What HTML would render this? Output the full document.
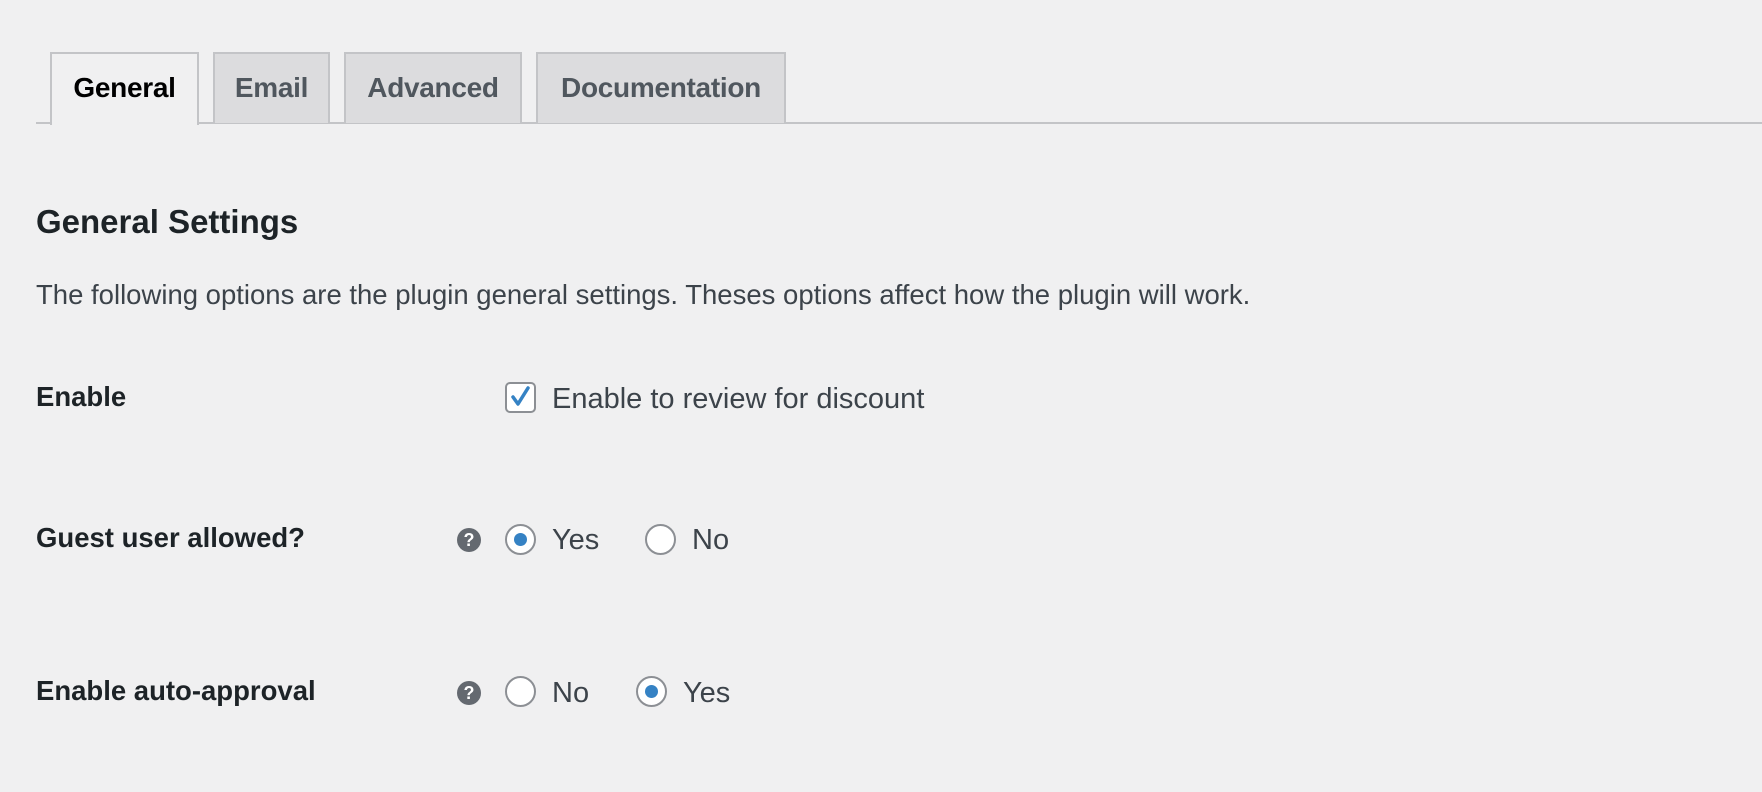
<!DOCTYPE html>
<html><head><meta charset="utf-8"><style>
*{box-sizing:border-box;margin:0;padding:0}
body{width:1762px;height:792px;background:#f0f0f1;font-family:"Liberation Sans",sans-serif;position:relative;overflow:hidden;color:#1d2327}
.line{position:absolute;left:36px;right:0;top:122px;height:2px;background:#c3c4c7}
.tab{position:absolute;top:52px;height:71px;border:2px solid #c3c4c7;border-bottom:none;background:#dcdcde;color:#50575e;font-weight:bold;font-size:28px;line-height:68px;text-align:center;letter-spacing:-0.3px}
.tab.act{background:#f0f0f1;color:#000;height:73px;z-index:2}
.abs{position:absolute;white-space:nowrap}
h2{position:absolute;left:36px;top:203px;font-size:33px;font-weight:bold;color:#1d2327}
.desc{left:36px;top:279px;font-size:27.5px;color:#3c434a}
.lbl{left:36px;font-size:27.5px;font-weight:bold;color:#1d2327}
.opt{font-size:29px;color:#3c434a}
.radio{position:absolute;width:31px;height:31px;border:2px solid #8c8f94;border-radius:50%;background:#fff}
.radio.on::after{content:"";position:absolute;left:7px;top:7px;width:13px;height:13px;border-radius:50%;background:#3582c4}
.help{position:absolute;width:24px;height:24px;border-radius:50%;background:#646970;color:#fff;font-size:18px;font-weight:bold;text-align:center;line-height:24px}
.cb{position:absolute;left:505px;top:382px;width:31px;height:31px;border:2px solid #8c8f94;border-radius:5px;background:#fff}
</style></head><body>
<div class="line"></div>
<div class="tab act" style="left:50px;width:149px">General</div>
<div class="tab" style="left:213px;width:117px">Email</div>
<div class="tab" style="left:344px;width:178px">Advanced</div>
<div class="tab" style="left:536px;width:250px">Documentation</div>
<h2>General Settings</h2>
<div class="abs desc">The following options are the plugin general settings. Theses options affect how the plugin will work.</div>

<div class="abs lbl" style="top:381px">Enable</div>
<div class="cb"><svg width="27" height="27" viewBox="0 0 27 27" style="position:absolute;left:0;top:0"><path d="M6 13 L11 20 L21 4" fill="none" stroke="#3582c4" stroke-width="3.5" stroke-linecap="round" stroke-linejoin="round"/></svg></div>
<div class="abs opt" style="left:552px;top:383px">Enable to review for discount</div>

<div class="abs lbl" style="top:522px">Guest user allowed?</div>
<div class="help" style="left:457px;top:528px">?</div>
<div class="radio on" style="left:505px;top:524px"></div>
<div class="abs opt" style="left:552px;top:524px">Yes</div>
<div class="radio" style="left:645px;top:524px"></div>
<div class="abs opt" style="left:692px;top:524px">No</div>

<div class="abs lbl" style="top:675px">Enable auto-approval</div>
<div class="help" style="left:457px;top:681px">?</div>
<div class="radio" style="left:505px;top:676px"></div>
<div class="abs opt" style="left:552px;top:677px">No</div>
<div class="radio on" style="left:636px;top:676px"></div>
<div class="abs opt" style="left:683px;top:677px">Yes</div>
</body></html>
